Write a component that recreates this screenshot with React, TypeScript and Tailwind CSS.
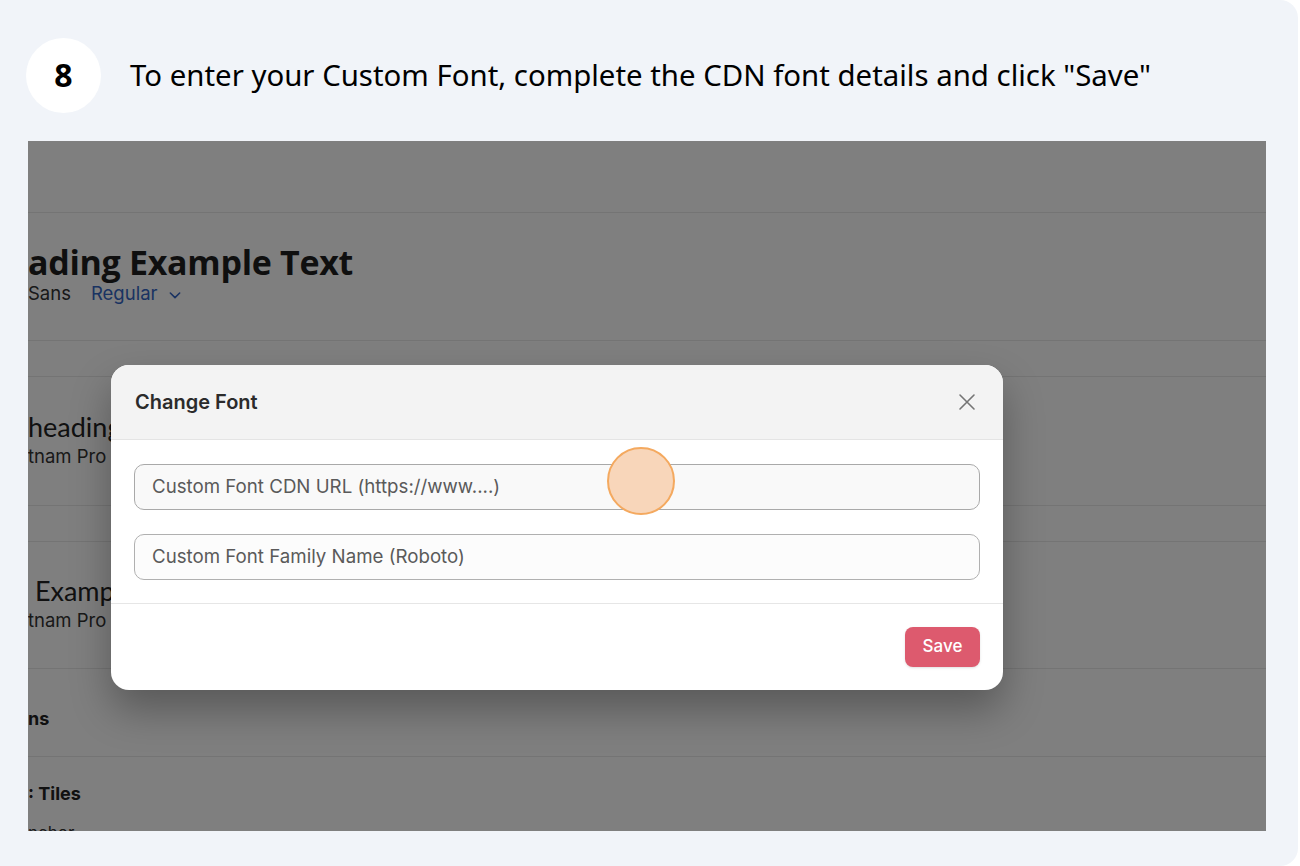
import React from 'react';

function Row({ children, className = '' }: { children?: React.ReactNode; className?: string }) {
  return <div className={`border-b border-[#e8e8e8] ${className}`}>{children}</div>;
}

export default function App() {
  return (
    <div className="w-[1300px] h-[866px] bg-white overflow-hidden">
      <div className="w-[1298px] h-[866px] bg-[#f1f4f9] rounded-r-[18px] flex flex-col">
        {/* Step heading */}
        <div className="flex items-center h-[141px] pl-[26px] pt-[9px]">
          <div className="w-[75px] h-[75px] rounded-full bg-white flex items-center justify-center">
            <span className="text-[32px] font-bold text-black" style={{ fontFamily: '"Open Sans", sans-serif' }}>8</span>
          </div>
          <p
            className="ml-[29px] text-[29.4px] text-black"
            style={{ fontFamily: '"Noto Sans", "Open Sans", sans-serif' }}
          >
            To enter your Custom Font, complete the CDN font details and click "Save"
          </p>
        </div>

        {/* Screenshot */}
        <div className="relative ml-[28px] w-[1238px] h-[690px] bg-white overflow-hidden" style={{ fontFamily: 'Inter, sans-serif' }}>
          <Row className="h-[72px]" />
          <Row className="h-[128px] pt-[30px]">
            <div className="text-[34px] font-bold leading-[38px] text-[#1f1f1f] tracking-[-0.3px]" style={{ fontFamily: '"Open Sans", sans-serif' }}>
              ading Example Text
            </div>
            <div className="flex items-center text-[18.5px] leading-[24px]">
              <span className="text-[#333]">Sans</span>
              <span className="ml-[20px] text-[#3466c4]">Regular</span>
              <svg className="ml-[9px] mt-[3px]" width="16" height="16" viewBox="0 0 24 24" fill="none" stroke="#3466c4" strokeWidth="2.4" strokeLinecap="round" strokeLinejoin="round">
                <path d="M5 9l7 7 7-7" />
              </svg>
            </div>
          </Row>
          <Row className="h-[36px]" />
          <Row className="h-[129px] pt-[33px]">
            <div className="text-[27px] leading-[34px] text-[#222]" style={{ fontFamily: 'Lato, sans-serif' }}>
              heading
            </div>
            <div className="text-[18.5px] leading-[24px] text-[#333]">tnam Pro</div>
          </Row>
          <Row className="h-[36px]" />
          <Row className="h-[127px] pt-[32px]">
            <div className="text-[27px] leading-[34px] text-[#222]" style={{ fontFamily: 'Lato, sans-serif' }}>
              &nbsp;Examp
            </div>
            <div className="text-[18.5px] leading-[24px] text-[#333]">tnam Pro</div>
          </Row>
          <Row className="h-[88px] flex items-center pt-[12px]">
            <span className="text-[18px] font-bold text-[#222]">ns</span>
          </Row>
          <div className="pt-[23px]">
            <div className="text-[18px] font-bold text-[#222]">: Tiles</div>
            <div className="text-[17px] text-[#333] mt-[14px]">nchor</div>
          </div>

          {/* dim overlay */}
          <div className="absolute inset-0 bg-black/50" />

          {/* Modal */}
          <div className="absolute left-[83px] top-[224px] w-[892px] h-[325px] bg-white rounded-[18px] overflow-hidden shadow-[0_20px_40px_rgba(0,0,0,0.3)] flex flex-col">
            <div className="h-[75px] bg-[#f3f3f3] border-b border-[#e4e4e4] flex items-center justify-between pl-[24px] pr-[27px]">
              <span className="text-[20px] font-semibold text-[#2b2b2b]">Change Font</span>
              <svg width="18" height="18" viewBox="0 0 18 18" fill="none" stroke="#757575" strokeWidth="1.6" strokeLinecap="round">
                <path d="M2 2l14 14M16 2L2 16" />
              </svg>
            </div>
            <div className="flex flex-col gap-[24px] px-[23px] pt-[24px] pb-[23px] border-b border-[#e6e6e6]">
              <div className="h-[46px] rounded-[10px] border border-[#a9a9a9] bg-[#f9f9f9] flex items-center pl-[17px]">
                <span className="text-[18.7px] text-[#5a5a5a]">Custom Font CDN URL (https://www....)</span>
              </div>
              <div className="h-[46px] rounded-[10px] border border-[#b0b0b0] bg-[#fcfcfc] flex items-center pl-[17px]">
                <span className="text-[18.7px] text-[#5a5a5a]">Custom Font Family Name (Roboto)</span>
              </div>
            </div>
            <div className="flex-1 flex items-start justify-end pr-[23px] pt-[23px]">
              <button className="w-[75px] h-[40px] rounded-[8px] bg-[#dd5a6e] text-white text-[17px] font-medium shadow-sm">
                Save
              </button>
            </div>
          </div>

          {/* click marker */}
          <div className="absolute left-[579px] top-[306px] w-[68px] h-[68px] rounded-full bg-[#f8d6ba] border-2 border-[#f4a95f]" />
        </div>
      </div>
    </div>
  );
}
